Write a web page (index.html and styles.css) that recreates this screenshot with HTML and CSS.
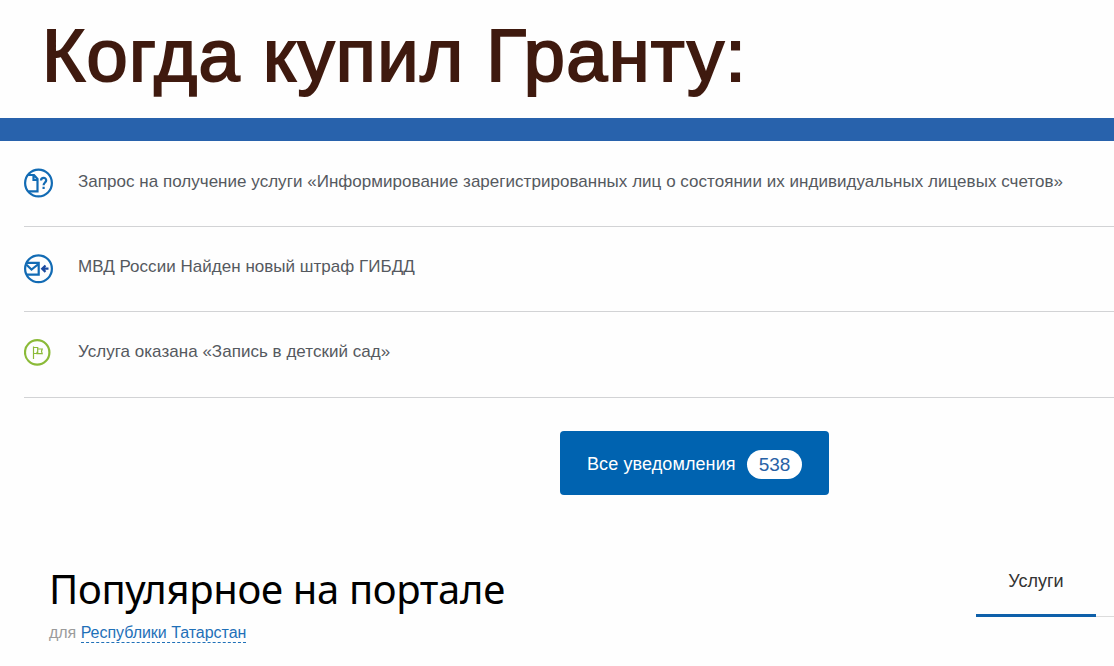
FILE: index.html
```html
<!DOCTYPE html>
<html lang="ru">
<head>
  <meta charset="UTF-8">
  <meta name="viewport" content="width=device-width, initial-scale=1.0">
  <title>Уведомления</title>
  <link rel="stylesheet" href="styles.css">
</head>
<body>

  <h1 class="caption">Когда купил Гранту:</h1>
  <div class="stripe"></div>

  <ul class="feed">
    <li class="feed-item">
      <svg class="icon" viewBox="0 0 30 30">
        <circle cx="14.5" cy="15" r="13.4"/>
        <path d="M4 7H10L13.5 11V23.3H4.5M9.5 6.5V12H14"/>
        <path d="M17 12.5C17.1 8.9 22.3 9.1 22.2 12.4C22.1 14.5 19.6 14.6 19.6 17.2M19.6 18.8V21"/>
      </svg>
      <span class="feed-text">Запрос на получение услуги «Информирование зарегистрированных лиц о состоянии их индивидуальных лицевых счетов»</span>
    </li>
    <li class="feed-item">
      <svg class="icon" viewBox="0 0 30 30">
        <circle cx="14.5" cy="14.7" r="13.4"/>
        <path d="M2 8.8H14.7V20.6H2.5M2.5 10.8L7.5 15.5L14.5 10"/>
        <path class="arrow" d="M24.5 14.7H18M21.5 11.5L18.2 14.7L21.5 17.9"/>
      </svg>
      <span class="feed-text">МВД России Найден новый штраф ГИБДД</span>
    </li>
    <li class="feed-item">
      <svg class="icon icon-done" viewBox="0 0 30 30">
        <circle cx="13.2" cy="13.4" r="12.2"/>
        <path class="flag" d="M9.5 7.5V20M9.5 8.5H13.7V14.5H9.5M13.7 10H18.2L17.5 12.3L18.2 14.6H13V12.8"/>
      </svg>
      <span class="feed-text">Услуга оказана «Запись в детский сад»</span>
    </li>
  </ul>

  <a class="btn-all">
    <span class="btn-label">Все уведомления</span>
    <span class="btn-count">538</span>
  </a>

  <div class="popular">
    <div class="popular-head">
      <h2>Популярное на портале</h2>
      <p class="region">для <a class="region-link">Республики Татарстан</a></p>
    </div>
    <div class="tabs">
      <a class="tab">Услуги</a>
    </div>
  </div>

</body>
</html>
```

FILE: styles.css
```css
* {
  box-sizing: border-box;
}

body {
  margin: 0;
  height: 666px;
  overflow: hidden;
  background: #fefefe;
  font-family: "Liberation Sans", Arial, sans-serif;
}

.caption {
  height: 118px;
  margin: 0;
  padding: 14px 0 0 42px;
  font-size: 74px;
  font-weight: normal;
  line-height: 84px;
  letter-spacing: 1.35px;
  color: #3f1a0f;
  white-space: nowrap;
  -webkit-text-stroke: 2px #3f1a0f;
}

.stripe {
  height: 23px;
  background: #2862ac;
}

.feed {
  margin: 0;
  padding: 0 0 0 24px;
  list-style: none;
}

.feed-item {
  display: flex;
  height: 85.5px;
  padding-top: 27px;
  border-bottom: 1px solid #d2d3d5;
}

.icon {
  width: 30px;
  height: 30px;
  margin-right: 24px;
  flex-shrink: 0;
  fill: none;
  stroke: #126bb4;
  stroke-width: 2.2;
}

.icon-done {
  stroke: #8bba38;
}

.icon .arrow {
  stroke: #1b4aa0;
}

.icon .flag {
  stroke-width: 1.2;
}

.feed-text {
  font-size: 17px;
  line-height: 28px;
  letter-spacing: 0.03px;
  color: #55595f;
  white-space: nowrap;
}

.feed-item + .feed-item .feed-text {
  line-height: 26px;
}

.btn-all {
  display: flex;
  align-items: center;
  width: 269px;
  height: 64px;
  margin: 33px 0 0 560px;
  padding: 3px 0 0 27px;
  border-radius: 4px;
  background: #0063b0;
  color: #fff;
}

.btn-label {
  width: 160px;
  font-size: 18px;
  line-height: 22px;
  letter-spacing: 0.1px;
}

.btn-count {
  width: 55px;
  height: 29px;
  border-radius: 15px;
  background: #fff;
  color: #2862a6;
  font-size: 19px;
  line-height: 29px;
  text-align: center;
}

.popular {
  display: flex;
  justify-content: space-between;
  margin-top: 65px;
  padding-left: 49px;
}

.popular h2 {
  margin: 0;
  font-family: "Noto Sans", sans-serif;
  font-size: 40px;
  font-weight: normal;
  line-height: 58px;
  letter-spacing: -0.33px;
  color: #000;
}

.region {
  margin: 6px 0 0;
  font-size: 16px;
  line-height: 18px;
  letter-spacing: -0.03px;
  color: #9b9b9b;
}

.region-link {
  padding-bottom: 1px;
  border-bottom: 1px dashed #1f70b8;
  color: #1f70b8;
}

.tabs {
  width: 138px;
  height: 57px;
  border-bottom: 1px solid #dcdcdc;
}

.tab {
  display: block;
  width: 120px;
  height: 57px;
  padding-top: 11px;
  border-bottom: 3px solid #0e60aa;
  font-size: 18px;
  line-height: 21px;
  color: #333;
  text-align: center;
}
```
